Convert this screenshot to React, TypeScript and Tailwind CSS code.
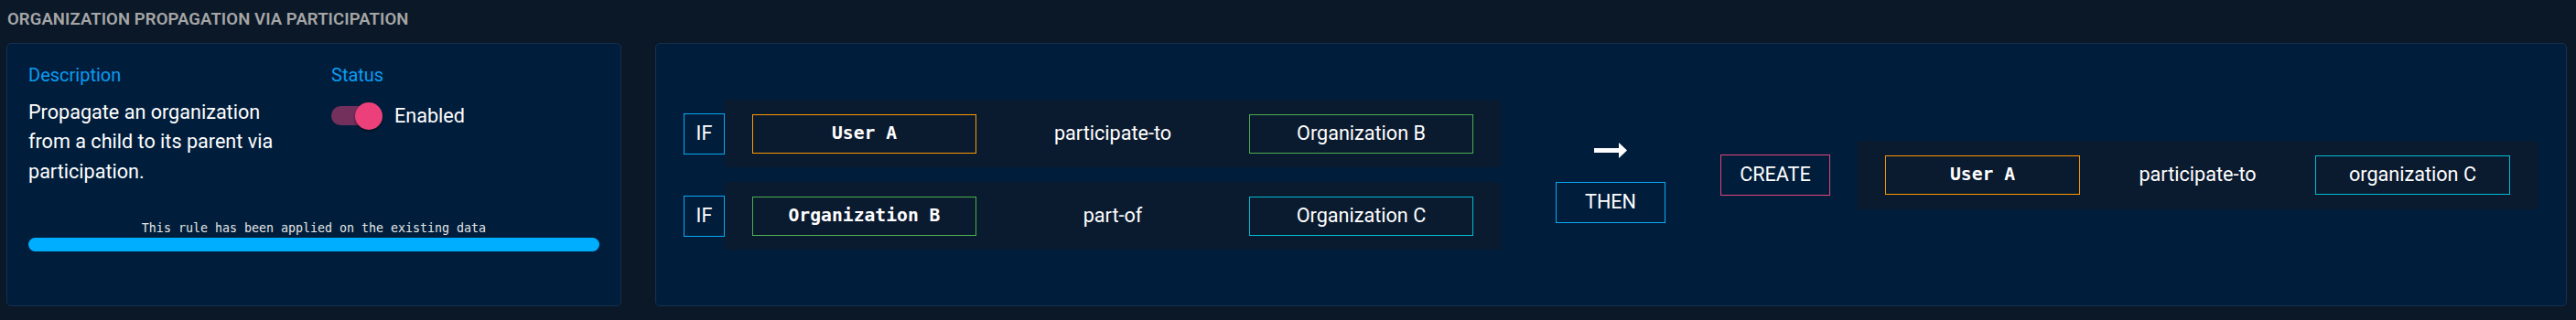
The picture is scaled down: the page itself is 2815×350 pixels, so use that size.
import React from 'react';

const sans = "font-['Roboto','Noto_Sans',sans-serif]";
const mono = "font-['DejaVu_Sans_Mono','Liberation_Mono',monospace]";

const Box = ({ text, color, isMono, width }: { text: string; color: string; isMono?: boolean; width: string }) => (
  <div className={`${width} h-[43px] flex items-center justify-center border ${color}`}>
    <span className={isMono ? `${mono} text-[19.7px] font-semibold` : `${sans} text-[21.6px]`}>{text}</span>
  </div>
);

const App = () => {
  return (
    <div className={`min-h-screen w-[2815px] h-[350px] bg-[#0a1828] text-white ${sans} px-[7px] pt-[10px]`}>
      <h2 className="ml-[1px] text-[18.5px] font-semibold uppercase text-[#a6a6a6] leading-[22px] tracking-[0.1px]">
        Organization propagation via participation
      </h2>

      <div className="mt-[15px] flex">
        {/* left card */}
        <div className="w-[672px] h-[288px] bg-[#001e3c] border border-[#15304f] rounded-[5px] px-[23px] pt-[19px]">
          <div className="flex">
            <div className="w-[331px]">
              <div className="text-[20px] leading-[30px] text-[#0c9cf2]">Description</div>
              <p className="mt-[10px] text-[21.6px] leading-[32.4px] text-white w-[300px]">
                Propagate an organization from a child to its parent via participation.
              </p>
            </div>
            <div>
              <div className="text-[20px] leading-[30px] text-[#0c9cf2]">Status</div>
              <div className="mt-[15px] flex items-center">
                <div className="relative w-[56px] h-[30px]">
                  <div className="absolute left-0 top-[4px] w-[51px] h-[21px] rounded-full bg-[#74305d]" />
                  <div className="absolute left-[26px] top-0 w-[30px] h-[30px] rounded-full bg-[#ec407a] shadow-[0_2px_3px_rgba(0,0,0,0.45)]" />
                </div>
                <span className="ml-[13px] text-[21.6px] leading-[30px]">Enabled</span>
              </div>
            </div>
          </div>
          <div className="mt-[38px] flex flex-col items-center">
            <span className={`${mono} text-[13.3px] leading-[16px] text-[#e4e4e4]`}>
              This rule has been applied on the existing data
            </span>
            <div className="mt-[2px] w-full h-[15px] rounded-full bg-[#00aeff]" />
          </div>
        </div>

        {/* right card */}
        <div className="ml-[37px] w-[2089px] h-[288px] bg-[#001e3c] border border-[#15304f] rounded-[5px] pl-[30px] flex items-center">
          <div className="flex flex-col gap-[16px]">
            {[
              { a: 'User A', ac: 'border-[#ff9800]', rel: 'participate-to', b: 'Organization B', bc: 'border-[#4caf50]' },
              { a: 'Organization B', ac: 'border-[#4caf50]', rel: 'part-of', b: 'Organization C', bc: 'border-[#00bcd4]' },
            ].map((r) => (
              <div key={r.a + r.rel} className="flex items-center">
                <div className="w-[45px] h-[45px] border border-[#0aa8f5] flex items-center justify-center text-[21.6px]">IF</div>
                <div className="w-[848px] h-[74px] bg-[#0a1a2f] px-[30px] flex items-center">
                  <Box text={r.a} color={r.ac} isMono width="w-[245px]" />
                  <div className="flex-1 text-center text-[21.6px]">{r.rel}</div>
                  <Box text={r.b} color={r.bc} width="w-[245px]" />
                </div>
              </div>
            ))}
          </div>

          <div className="ml-[60px] mt-[18px] flex flex-col items-center w-[120px]">
            <svg width="36" height="17" viewBox="0 0 36 17">
              <rect x="0" y="6" width="29" height="5" fill="#ffffff" />
              <polygon points="27,0 36,8.5 27,17" fill="#ffffff" />
            </svg>
            <div className="mt-[26px] w-[120px] h-[45px] border border-[#0aa8f5] flex items-center justify-center text-[21.6px]">
              THEN
            </div>
          </div>

          <div className="ml-[60px] w-[120px] h-[45px] border border-[#e0457b] flex items-center justify-center text-[21.6px]">
            CREATE
          </div>

          <div className="ml-[30px] w-[743px] h-[75px] bg-[#0a1a2f] px-[30px] flex items-center">
            <Box text="User A" color="border-[#ff9800]" isMono width="w-[213px]" />
            <div className="flex-1 text-center text-[21.6px]">participate-to</div>
            <Box text="organization C" color="border-[#00bcd4]" width="w-[213px]" />
          </div>
        </div>
      </div>
    </div>
  );
};

export default App;
